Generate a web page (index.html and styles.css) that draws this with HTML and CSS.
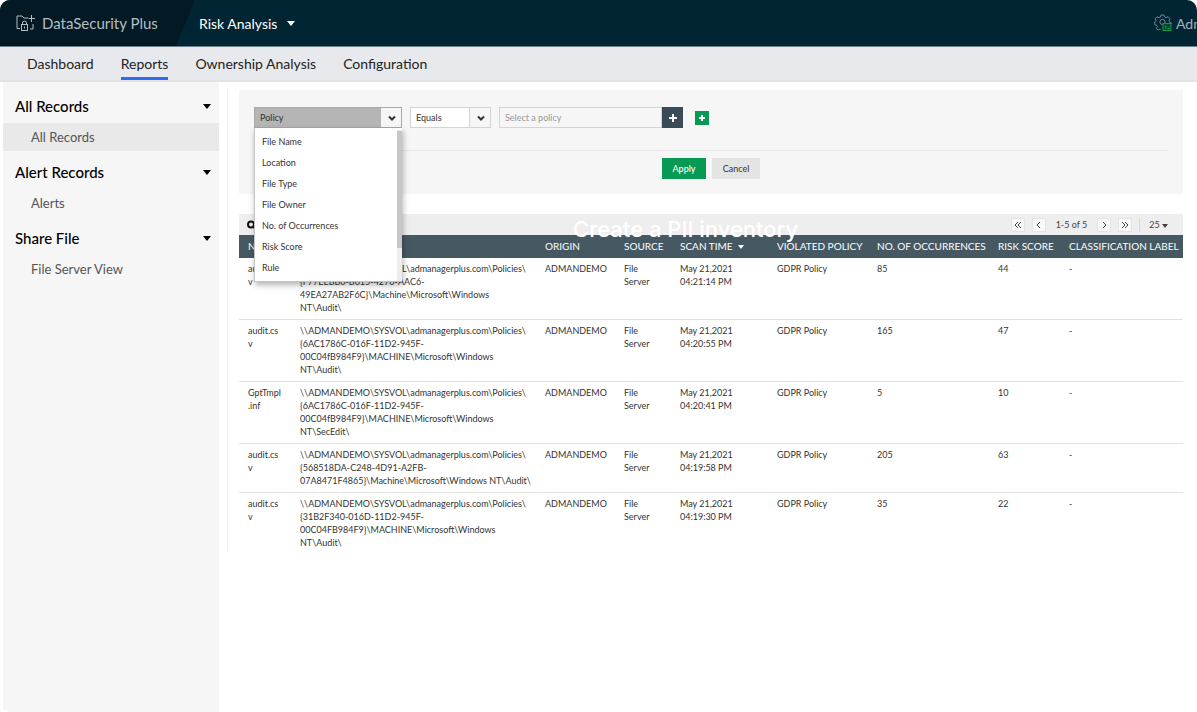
FILE: index.html
```html
<!DOCTYPE html>
<html lang="en">
<head>
    <meta charset="UTF-8">
    <title>DataSecurity Plus - Risk Analysis</title>
    <link rel="stylesheet" href="styles.css">
</head>
<body>
<div class="app">
    <header class="topbar">
        <div class="brand">
            <svg class="brand-icon" viewBox="0 0 20 18" fill="none" stroke="currentColor" stroke-width="1">
                <path d="M4 14.500H1V2h5l2 2h4M17 10v5h-3M15.500 1v7M12.500 4.500h6.500"/>
                <rect x="5.500" y="10.500" width="6" height="6"/>
                <path d="M6.500 10.500V9a2 2 0 0 1 4 0v1.500M8.500 12.500v2"/>
            </svg>
            <span>DataSecurity Plus</span>
        </div>
        <button type="button" class="module">Risk Analysis <span class="caret"></span></button>
        <div class="account">
            <svg viewBox="0 0 18 18" width="18" height="18" fill="none">
                <path d="M7 1h3l.5 2 1.500.700 2-1 2 2-1 2 .7 1.500 1.500.5v1M7 1l-.5 2-1.500.700-2-1-1.800 2 1 2L.700 8v2.500l2 .7.600 1.300-1 2 1.800 1.500 1.800-1 .8.500" stroke="#6f838d"/>
                <circle cx="8.500" cy="8" r="2.600" stroke="#6f838d"/>
                <rect x="9" y="9.500" width="8" height="7" fill="#03492f" stroke="#0b9a4d"/>
                <path d="M11 12l1.500 1.200L11 14.500M13.500 14.500h2" stroke="#0b9a4d"/>
            </svg>
            <span>Admin</span>
        </div>
    </header>

    <nav class="tabs">
        <a href="#">Dashboard</a>
        <a href="#" class="active">Reports</a>
        <a href="#">Ownership Analysis</a>
        <a href="#">Configuration</a>
    </nav>

    <div class="content">
        <aside class="sidebar">
            <button type="button" class="group">All Records <span class="caret"></span></button>
            <a href="#" class="selected">All Records</a>
            <button type="button" class="group">Alert Records <span class="caret"></span></button>
            <a href="#">Alerts</a>
            <button type="button" class="group">Share File <span class="caret"></span></button>
            <a href="#">File Server View</a>
        </aside>

        <main class="report">
            <form class="filter">
                <div class="conditions">
                    <div class="field">
                        <select class="field-select" aria-label="Field">
                            <option>Policy</option>
                        </select>
                        <svg class="chevron" viewBox="0 0 8 6"><path d="M1 1.500l3 3 3-3"/></svg>
                        <ul class="menu">
                            <li>File Name</li>
                            <li>Location</li>
                            <li>File Type</li>
                            <li>File Owner</li>
                            <li>No. of Occurrences</li>
                            <li>Risk Score</li>
                            <li>Rule</li>
                        </ul>
                    </div>
                    <div class="operator">
                        <select class="operator-select" aria-label="Operator">
                            <option>Equals</option>
                        </select>
                        <svg class="chevron" viewBox="0 0 8 6"><path d="M1 1.500l3 3 3-3"/></svg>
                    </div>
                    <div class="value">
                        <input type="text" placeholder="Select a policy" aria-label="Policy">
                        <button type="button" class="pick" aria-label="Pick a policy">
                            <svg viewBox="0 0 8 8"><path d="M4 0v8M0 4h8"/></svg>
                        </button>
                    </div>
                    <button type="button" class="add" aria-label="Add condition">
                        <svg viewBox="0 0 8 8"><path d="M4 1v6M1 4h6"/></svg>
                    </button>
                </div>
                <div class="actions">
                    <button type="submit" class="apply">Apply</button>
                    <button type="button" class="cancel">Cancel</button>
                </div>
            </form>

            <div class="toolbar">
                <button type="button" class="search" aria-label="Search">
                    <svg viewBox="0 0 10 10"><circle cx="4" cy="4.500" r="3"/><path d="M6 6.500l3 3"/></svg>
                </button>
                <h2 class="caption">Create a PII inventory</h2>
                <div class="pager">
                    <button type="button" aria-label="First page"><svg viewBox="0 0 8 8"><path d="M4 1L1 4l3 3M7 1L4 4l3 3"/></svg></button>
                    <button type="button" aria-label="Previous page"><svg viewBox="0 0 8 8"><path d="M5 1L2 4l3 3"/></svg></button>
                    <span class="range">1-5 of 5</span>
                    <button type="button" aria-label="Next page"><svg viewBox="0 0 8 8"><path d="M3 1l3 3-3 3"/></svg></button>
                    <button type="button" aria-label="Last page"><svg viewBox="0 0 8 8"><path d="M1 1l3 3-3 3M4 1l3 3-3 3"/></svg></button>
                    <button type="button" class="page-size">25 <span class="caret"></span></button>
                </div>
            </div>

            <table class="records">
                <colgroup>
                    <col class="c-name"><col class="c-path"><col class="c-origin"><col class="c-source"><col class="c-time"><col class="c-policy"><col class="c-count"><col class="c-score"><col>
                </colgroup>
                <thead>
                    <tr>
                        <th>NAME</th>
                        <th>LOCATION</th>
                        <th>ORIGIN</th>
                        <th>SOURCE</th>
                        <th>SCAN TIME <span class="caret"></span></th>
                        <th>VIOLATED POLICY</th>
                        <th>NO. OF OCCURRENCES</th>
                        <th>RISK SCORE</th>
                        <th>CLASSIFICATION LABEL</th>
                    </tr>
                </thead>
                <tbody>
                    <tr>
                        <td>audit.cs<br>v</td>
                        <td>\\ADMANDEMO\SYSVOL\admanagerplus.com\Policies\<br>{F77EEBB0-B015-4276-AAC6-<br>49EA27AB2F6C}\Machine\Microsoft\Windows<br>NT\Audit\</td>
                        <td>ADMANDEMO</td>
                        <td>File<br>Server</td>
                        <td>May 21,2021<br>04:21:14 PM</td>
                        <td>GDPR Policy</td>
                        <td>85</td>
                        <td>44</td>
                        <td>-</td>
                    </tr>
                    <tr>
                        <td>audit.cs<br>v</td>
                        <td>\\ADMANDEMO\SYSVOL\admanagerplus.com\Policies\<br>{6AC1786C-016F-11D2-945F-<br>00C04fB984F9}\MACHINE\Microsoft\Windows<br>NT\Audit\</td>
                        <td>ADMANDEMO</td>
                        <td>File<br>Server</td>
                        <td>May 21,2021<br>04:20:55 PM</td>
                        <td>GDPR Policy</td>
                        <td>165</td>
                        <td>47</td>
                        <td>-</td>
                    </tr>
                    <tr>
                        <td>GptTmpl<br>.inf</td>
                        <td>\\ADMANDEMO\SYSVOL\admanagerplus.com\Policies\<br>{6AC1786C-016F-11D2-945F-<br>00C04fB984F9}\MACHINE\Microsoft\Windows<br>NT\SecEdit\</td>
                        <td>ADMANDEMO</td>
                        <td>File<br>Server</td>
                        <td>May 21,2021<br>04:20:41 PM</td>
                        <td>GDPR Policy</td>
                        <td>5</td>
                        <td>10</td>
                        <td>-</td>
                    </tr>
                    <tr>
                        <td>audit.cs<br>v</td>
                        <td>\\ADMANDEMO\SYSVOL\admanagerplus.com\Policies\<br>{568518DA-C248-4D91-A2FB-<br>07A8471F4865}\Machine\Microsoft\Windows NT\Audit\</td>
                        <td>ADMANDEMO</td>
                        <td>File<br>Server</td>
                        <td>May 21,2021<br>04:19:58 PM</td>
                        <td>GDPR Policy</td>
                        <td>205</td>
                        <td>63</td>
                        <td>-</td>
                    </tr>
                    <tr>
                        <td>audit.cs<br>v</td>
                        <td>\\ADMANDEMO\SYSVOL\admanagerplus.com\Policies\<br>{31B2F340-016D-11D2-945F-<br>00C04FB984F9}\MACHINE\Microsoft\Windows<br>NT\Audit\</td>
                        <td>ADMANDEMO</td>
                        <td>File<br>Server</td>
                        <td>May 21,2021<br>04:19:30 PM</td>
                        <td>GDPR Policy</td>
                        <td>35</td>
                        <td>22</td>
                        <td>-</td>
                    </tr>
                </tbody>
            </table>
        </main>
    </div>
</div>
</body>
</html>
```

FILE: styles.css
```css
* {
    box-sizing: border-box;
}
body {
    margin: 0;
    background-color: white;
    color: #333;
    font-family: Lato, "Liberation Sans", sans-serif;
    font-size: 9px;
}
button, select, input {
    font-family: inherit;
    font-size: inherit;
    color: inherit;
    margin: 0;
    padding: 0;
    border: none;
    border-radius: 0;
    background: none;
}
a {
    color: inherit;
    text-decoration: none;
}
svg {
    fill: none;
    stroke: currentColor;
}
.app {
    display: flex;
    flex-direction: column;
    min-height: 100vh;
    border-radius: 10px;
    overflow: hidden;
}
.caret {
    display: inline-block;
    border: 4px solid transparent;
    border-top: 5px solid currentColor;
    border-bottom: none;
}

/* top bar */
.topbar {
    display: flex;
    align-items: stretch;
    height: 47px;
    background-color: #022534;
    border-bottom: 1px solid #6b7f88;
    color: white;
    overflow: hidden;
}
.brand {
    display: flex;
    align-items: center;
    gap: 6px;
    width: 195px;
    padding-left: 16px;
    background-color: #031a25;
    color: #b3bdc3;
    font-size: 15px;
    clip-path: polygon(0 0, 100% 0, 176px 100%, 0 100%);
}
.brand-icon {
    width: 20px;
    height: 18px;
}
.module {
    display: flex;
    align-items: center;
    gap: 10px;
    padding-left: 4px;
    font-size: 14px;
}
.account {
    display: flex;
    align-items: center;
    gap: 4px;
    width: 43px;
    margin-left: auto;
    color: #a3b0b7;
    font-size: 14px;
    white-space: nowrap;
}
.account svg {
    flex: none;
}

/* tabs */
.tabs {
    display: flex;
    gap: 27px;
    height: 35px;
    padding-left: 27px;
    background-color: #e8e9ed;
    border-bottom: 2px solid #e3e3e4;
    color: #222;
    font-size: 14px;
    line-height: 34px;
}
.tabs .active {
    border-bottom: 3px solid #2d6bf0;
}

/* sidebar */
.content {
    display: flex;
    flex: 1;
    align-items: flex-start;
}
.sidebar {
    align-self: stretch;
    flex: none;
    width: 216px;
    margin-left: 3px;
    padding-top: 9px;
    background-color: #f6f6f6;
}
.group {
    display: flex;
    align-items: center;
    justify-content: space-between;
    width: 100%;
    height: 32px;
    padding: 0 8px 2px 12px;
    color: #000;
    font-size: 15px;
    font-weight: 500;
}
.sidebar a {
    display: block;
    margin-bottom: 6px;
    padding-left: 28px;
    color: #555;
    font-size: 13px;
    line-height: 28px;
}
.sidebar .selected {
    background-color: #e9e9e9;
}

/* report */
.report {
    flex: 1;
    min-width: 0;
    margin: 8px 14px 0 8px;
    padding-left: 11px;
    border-left: 1px solid #eee;
}
.filter {
    margin-bottom: 20px;
    padding: 17px 15px 15px;
    background-color: #f6f6f6;
}
.conditions {
    display: flex;
    align-items: center;
    gap: 8px;
    padding-bottom: 22px;
    border-bottom: 1px solid #e8e8e8;
}
.field, .operator {
    position: relative;
}
.field-select, .operator-select {
    display: block;
    height: 21px;
    padding: 0 5px;
    border: 1px solid #d4d4d4;
    appearance: none;
}
.field-select {
    width: 148px;
    border-color: #a8a8a8;
    background: linear-gradient(to left, #f6f6f6 20px, #b5b5b5 20px);
}
.operator-select {
    width: 81px;
    background: linear-gradient(to left, #f6f6f6 20px, #d4d4d4 20px, #d4d4d4 21px, white 21px);
}
.chevron {
    position: absolute;
    top: 8px;
    right: 6px;
    width: 8px;
    height: 6px;
    color: #333;
    stroke-width: 2;
    pointer-events: none;
}
.menu {
    position: absolute;
    z-index: 2;
    top: 21px;
    left: 0;
    width: 148px;
    height: 154px;
    margin: 0;
    padding: 3px 7px;
    list-style: none;
    background: linear-gradient(#c6c6c6, #c6c6c6) right 3px / 5px 117px no-repeat, linear-gradient(#ededed, #ededed) right bottom / 5px 151px no-repeat, white;
    border: 1px solid #c4c4c4;
    border-width: 0 0 1px 1px;
    box-shadow: 1px 3px 6px rgba(0, 0, 0, 0.3);
}
.menu li {
    line-height: 21px;
}
.value {
    display: flex;
    width: 184px;
}
.value input {
    flex: 1;
    min-width: 0;
    height: 21px;
    padding: 0 5px;
    border: 1px solid #d4d4d4;
}
.value input::placeholder {
    color: #999;
}
.pick {
    width: 21px;
    height: 21px;
    background-color: #3a4b56;
    color: white;
}
.pick svg, .add svg {
    display: block;
    width: 8px;
    height: 8px;
    margin: auto;
    stroke-width: 2;
}
.add {
    width: 14px;
    height: 14px;
    margin-left: 4px;
    background-color: #069a55;
    color: white;
}
.actions {
    display: flex;
    justify-content: center;
    gap: 6px;
    padding-top: 7px;
}
.actions button {
    height: 21px;
}
.actions .apply {
    width: 44px;
    background-color: #069a55;
    color: white;
    font-weight: 500;
}
.actions .cancel {
    width: 48px;
    background-color: #e4e4e4;
}

/* toolbar */
.toolbar {
    position: relative;
    display: flex;
    align-items: center;
    justify-content: space-between;
    height: 21px;
    padding: 0 15px 0 8px;
    background-color: #eee;
}
.search {
    color: #111;
}
.search svg {
    display: block;
    width: 10px;
    height: 10px;
    stroke-width: 2;
}
.caption {
    position: absolute;
    top: 1px;
    left: 334px;
    margin: 0;
    color: white;
    font-family: Inter, sans-serif;
    font-size: 22px;
    font-weight: 500;
    line-height: 28px;
    white-space: nowrap;
}
.pager {
    display: flex;
    align-items: center;
    gap: 7px;
    color: #444;
}
.pager button {
    width: 14px;
    height: 14px;
    background-color: #f8f8f8;
    border: 1px solid #e4e4e4;
}
.pager svg {
    display: block;
    width: 8px;
    height: 8px;
    margin: auto;
}
.range {
    padding: 0 3px;
}
.pager .page-size {
    width: auto;
    padding-left: 9px;
    border: none;
    border-left: 1px solid #d8d8d8;
    background: none;
}
.page-size .caret, .records .caret {
    border-width: 3px;
    border-top-width: 4px;
    border-bottom-width: 0;
    vertical-align: middle;
}

/* records */
.records {
    width: 100%;
    border-collapse: collapse;
    table-layout: fixed;
    line-height: 13px;
}
.records th {
    height: 23px;
    padding: 0 0 0 9px;
    background-color: #465962;
    color: white;
    font-size: 10px;
    font-weight: normal;
    text-align: left;
    white-space: nowrap;
}
.records td {
    padding: 4px 0 5px 9px;
    border-bottom: 1px solid #e2e2e2;
    vertical-align: top;
    white-space: nowrap;
}
.records tbody tr:last-child td {
    padding-bottom: 1px;
    border-bottom: none;
}
.records .caret {
    margin-left: 3px;
}
.c-name { width: 52px; }
.c-path { width: 245px; }
.c-origin { width: 79px; }
.c-source { width: 56px; }
.c-time { width: 97px; }
.c-policy { width: 100px; }
.c-count { width: 121px; }
.c-score { width: 71px; }
```
